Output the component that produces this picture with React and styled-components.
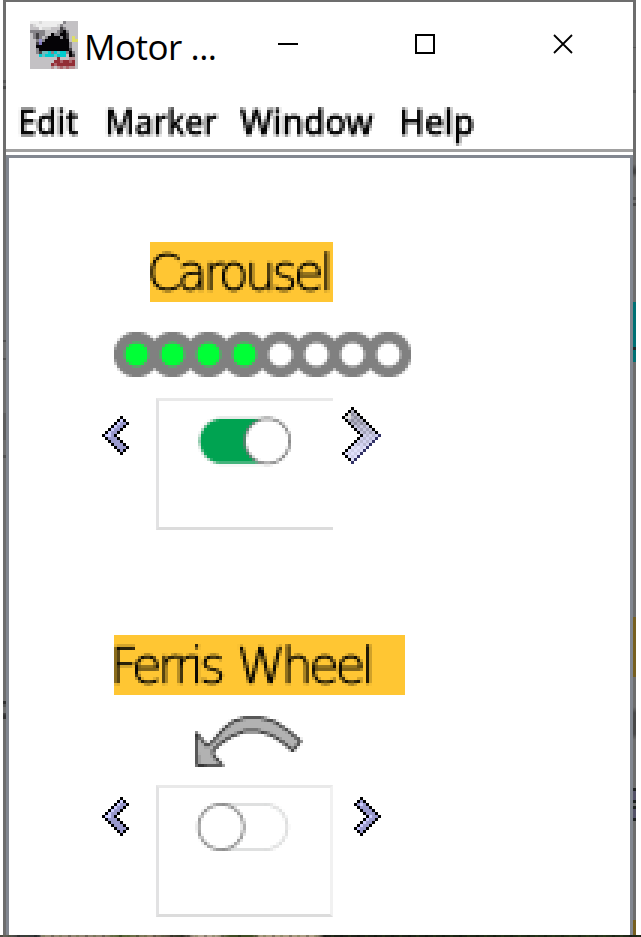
import React from "react";
import styled, { createGlobalStyle } from "styled-components";

const GlobalStyle = createGlobalStyle`
  html, body { margin: 0; background: #fff; overflow: hidden; }
  * { box-sizing: border-box; }
`;

const Screen = styled.main`
  width: 641px;
  height: 937px;
  display: grid;
  grid-template-columns: 3px 3px 627px 3px 5px;
  grid-template-rows: 935px 2px;
  background: #fff;
`;

const FilterDefs = styled.svg`
  position: absolute;
  width: 0;
  height: 0;
`;

const LeftEdge = styled.div`
  grid-column: 2;
  background: linear-gradient(
    #6d6d6d 80px, #555 80px, #555 83px, #6d6d6d 83px, #6d6d6d 86px, #484848 86px, #484848 89px,
    #6d6d6d 89px, #6d6d6d 340px, #505050 340px, #505050 342px, #6d6d6d 342px, #6d6d6d 358px,
    #505050 358px, #505050 360px, #6d6d6d 360px, #6d6d6d 413px, #5d5d5d 413px, #5d5d5d 440px,
    #6d6d6d 440px, #6d6d6d 455px, #515151 455px, #515151 458px, #6d6d6d 458px, #6d6d6d 701px,
    #303030 701px, #303030 704px, #555 704px, #555 707px, #6d6d6d 707px, #6d6d6d 713px,
    #484848 713px, #303030 716px, #303030 719px, #6d6d6d 719px);
`;

const RightEdge = styled.div`
  background: linear-gradient(
    #6d6d6d 47px, #555 47px, #555 48px, #6d6d6d 48px, #6d6d6d 90px, #555 90px, #555 93px,
    #6d6d6d 93px, #6d6d6d 164px, #555 167px, #424242 170px, #424242 173px, #5a5a5a 175px,
    #6d6d6d 178px, #6d6d6d 197px, #505050 197px, #505050 200px, #6d6d6d 200px, #6d6d6d 203px,
    #484848 203px, #484848 206px, #6d6d6d 206px, #6d6d6d 302px, #007074 302px, #007074 347px,
    #202828 347px, #202828 350px, #007074 350px, #007074 362px, #6d6d6d 362px, #6d6d6d 617px,
    #765f20 617px, #765f20 677px, #6d6d6d 677px, #6d6d6d 707px, #484848 713px, #484848 734px,
    #6d6d6d 740px, #6d6d6d 788px, #1c1f1f 788px, #1c1f1f 791px, #545268 791px, #545268 800px,
    #1c1f1f 800px, #1c1f1f 803px, #6d6d6d 803px, #6d6d6d 806px, #1c1f1f 806px, #1c1f1f 809px,
    #545268 809px, #545268 818px, #1c1f1f 818px, #1c1f1f 821px, #6d6d6d 821px, #6d6d6d 920px,
    #765f20 920px);
`;

const GroundStrip = styled.div`
  grid-column: 1 / -1;
  background:
    repeating-linear-gradient(90deg, rgba(0,0,0,.25) 0 3px, transparent 3px 8px, rgba(60,80,30,.25) 8px 11px, transparent 11px 17px),
    linear-gradient(90deg, #6d6a5d 0, #3a3c3c 20px, #343838 39px, #958b78 42px, #8a806c 105px,
      #50602f 120px, #8e8068 150px, #29291f 182px, #b1a491 196px, #b1a491 215px, #3e4a23 230px,
      #3e4a23 252px, #a79b80 260px, #a99c83 315px, #1d2018 325px, #1b2415 460px, #25331b 600px, #1b2016 641px);
`;

const Window = styled.section`
  height: 935px;
  border-top: 2px solid #6d6d6d;
  display: flex;
  flex-direction: column;
  background: #fff;
`;

const TitleBar = styled.header`
  height: 93px;
  padding: 19px 0 0 24px;
  display: flex;
  align-items: flex-start;
`;

const Title = styled.h1`
  margin: 0 0 0 6px;
  width: 191px;
  height: 48px;
  font: 400 35px/51px "Open Sans", sans-serif;
  letter-spacing: -0.5px;
  color: #000;
  white-space: pre;
`;

const Controls = styled.div`
  display: flex;
  gap: 117px;
  padding: 13px 0 0 3px;
`;

const MenuBar = styled.nav`
  height: 60px;
  border-bottom: 3px solid #fff;
  box-shadow: inset 0 -3px #a0a0a0;
  display: grid;
  grid-template-columns: 87px 135px 159px 1fr;
  padding-left: 12px;
  filter: url(#coarse);
`;

const MenuItem = styled.span`
  height: 57px;
  font: 500 37px/51px "Noto Sans", sans-serif;
  -webkit-text-stroke: 0.6px #000;
  color: #000;
  white-space: pre;
  transform: scaleX(${(p) => p.$stretch});
  transform-origin: 0 0;
`;

const Client = styled.div`
  flex: 1;
  border: 3px solid #828790;
  border-bottom: 0;
  display: flex;
  flex-direction: column;
  align-items: flex-start;
`;

const Panel = styled.section`
  margin-top: ${(p) => p.$top}px;
  display: flex;
  flex-direction: column;
  align-items: flex-start;
`;

const Caption = styled.h2`
  margin: 0 0 0 ${(p) => p.$indent}px;
  width: ${(p) => p.$width}px;
  height: 60px;
  background: #ffc633;
`;

const CaptionText = styled.span`
  display: block;
  width: 100%;
  height: 60px;
  font: 200 49.5px/62px "DejaVu Sans Light", "DejaVu Sans", sans-serif;
  -webkit-text-stroke: 0.9px #000;
  letter-spacing: ${(p) => p.$spacing}px;
  word-spacing: 4px;
  text-indent: ${(p) => p.$shift}px;
  color: #000;
  white-space: pre;
  filter: url(#coarse);
`;

const Indicator = styled.div`
  margin: ${(p) => p.$top}px 0 0 ${(p) => p.$indent}px;
  display: flex;
`;

const Stepper = styled.div`
  margin-top: ${(p) => p.$top}px;
  padding-left: 93px;
  display: flex;
  align-items: flex-start;
`;

const StepButton = styled.button`
  border: 0;
  padding: 0;
  background: none;
  display: flex;
  margin-top: ${(p) => p.$drop}px;
`;

const Slot = styled.div`
  width: 177px;
  height: ${(p) => p.$height}px;
  margin: 0 ${(p) => p.$after}px 0 27px;
  padding: ${(p) => p.$padTop}px 0 0 ${(p) => p.$padLeft}px;
  border: 3px solid #e2e2e3;
  border-top-color: #e9e9e9;
  border-bottom-color: #dcdcdc;
  border-right: ${(p) => (p.$open ? "0" : "3px solid #f1f1f1")};
`;

const Art = styled.svg`
  display: block;
  flex: none;
  shape-rendering: crispEdges;
`;

const CELL = 3;

/* Draws a grid of 3px cells, each coloured by paint(column, row). */
function Pixels({ cols, rows, paint }) {
  const cells = [];
  for (let y = 0; y < rows; y++) {
    for (let x = 0; x < cols; x++) {
      const fill = paint(x, y);
      if (fill) cells.push(<rect key={`${x}-${y}`} x={x} y={y} width="1" height="1" fill={fill} />);
    }
  }
  return (
    <Art width={cols * CELL} height={rows * CELL} viewBox={`0 0 ${cols} ${rows}`}>
      {cells}
    </Art>
  );
}

/* Averages a point colour function over one cell. */
const smooth = (colourAt) => (x, y) => {
  const sum = [0, 0, 0];
  const n = 6;
  for (let i = 0; i < n; i++)
    for (let j = 0; j < n; j++) {
      const c = colourAt(x + (i + 0.5) / n, y + (j + 0.5) / n);
      for (let k = 0; k < 3; k++) sum[k] += c[k];
    }
  const mean = sum.map((v) => Math.round(v / (n * n)));
  return mean.every((v) => v > 252) ? null : `rgb(${mean.join(",")})`;
};

const WHITE = [255, 255, 255];

const dotsPaint = smooth((x, y) => {
  let colour = WHITE;
  for (let i = 0; i < 8; i++) {
    const d = Math.hypot(x - (7.5 + 12 * i), y - 7.5);
    if (d < 3.9) return i < 4 ? [0, 255, 54] : WHITE;
    if (d < 7.6) colour = [128, 128, 128];
  }
  return colour;
});

const pillDistance = (x, y, x1, x2, cy) => Math.hypot(x - Math.min(Math.max(x, x1), x2), y - cy);

const onPaint = smooth((x, y) => {
  const d = Math.hypot(x - 23.1, y - 8.35);
  if (d < 7.1) return WHITE;
  if (d < 7.85) return [118, 118, 118];
  const p = pillDistance(x, y, 8.1, 23, 8.35);
  if (p < 7.4) return [0, 163, 81];
  if (p < 7.9) return [205, 215, 209];
  return WHITE;
});

const offPaint = smooth((x, y) => {
  const d = Math.hypot(x - 8.7, y - 8);
  if (d < 7.1) return WHITE;
  if (d < 7.95) return [135, 135, 135];
  const p = pillDistance(x, y, 9, 23.2, 8);
  if (p > 7.1 && p < 7.95) return [217, 218, 218];
  return WHITE;
});

const ARROW = [
  [1.5, 5.7], [5, 9.9], [7.2, 8.2], [10.4, 4.4], [13.8, 1.8], [17.6, 0.6], [23, 0.6], [27.6, 1.9],
  [32.5, 5.2], [36.2, 8.4], [33.6, 11.6], [30.3, 8.8], [26.5, 6.4], [22, 5], [17.7, 5], [13.2, 6.8],
  [9.4, 9.2], [7, 11.6], [7.2, 13.2], [10.2, 16.4], [1.7, 16.5],
];

const arrowPaint = smooth((x, y) => {
  let inside = false;
  let near = 99;
  ARROW.forEach(([ax, ay], i) => {
    const [bx, by] = ARROW[(i + 1) % ARROW.length];
    if (ay > y !== by > y && x < ((bx - ax) * (y - ay)) / (by - ay) + ax) inside = !inside;
    const t = Math.max(0, Math.min(1, ((x - ax) * (bx - ax) + (y - ay) * (by - ay)) / ((bx - ax) ** 2 + (by - ay) ** 2)));
    near = Math.min(near, Math.hypot(x - ax - t * (bx - ax), y - ay - t * (by - ay)));
  });
  if (near < 0.45) return [55, 55, 55];
  return inside ? [178, 178, 178] : WHITE;
});

/* Small chevron: black outline, lavender inside, lit on its upper edge. */
const smallShape = (x, y) => {
  const v = Math.abs(y - 6);
  const outer = 8 - v;
  const inner = v > 4 ? v - 4 : 4 - v;
  if (x < inner || x > outer) return null;
  if (x === inner || x === outer) return "#000";
  return "#9999cc";
};
const smallNext = (x, y) => {
  const fill = smallShape(x, y);
  return fill === "#9999cc" && ((y <= 2 && x === y) || (y > 6 && x === 11 - y) || (y === 6 && x === 5)) ? "#ccccff" : fill;
};
const smallPrevious = (x, y) => {
  const fill = smallShape(8 - x, y);
  return fill === "#9999cc" && (x === 7 - y || (y === 6 && x < 3)) ? "#ccccff" : fill;
};

/* Large chevron: highlighted state with a dithered face and navy lower edge. */
const largeNext = (x, y) => {
  const v = Math.abs(y - 9);
  const outer = 12 - v;
  const inner = v > 6 ? v - 6 : 6 - v;
  if (x < inner || x > outer) return null;
  if (x === inner) return y === 18 ? "#333366" : "#000";
  if (x === outer) return y >= 9 ? "#333366" : "#000";
  if (x < 3 && y < 4) return "#dcdcdc";
  const odd = (x + y) % 2;
  if (y < 6) return odd ? "#8e8ea0" : "#b0b0c2";
  if (y < 9) return odd ? "#a3a3b8" : "#c6c6de";
  if (y < 13) return odd ? "#b9b9d2" : "#d2d2f0";
  return odd ? "#cfcfe8" : "#e0e0fb";
};

const ENGINE = [
  "wwwvwwwwwwwg....",
  ".vwwwwwwwvg.....",
  "...wvvv...dg....",
  "ggggg....gdkg...",
  ".gdgg..kggkkd...",
  ".gdg.gkkkkgkd.y.",
  "..gbgkkkkkkkk.yy",
  "..dpkkkkkkkkkg..",
  "..kkkkkkkkkkkg..",
  "..gkkkkkkkkkkd..",
  "..gdaacgcaccgkg.",
  "...cacccaccc.kd.",
  ".........r...nn.",
  "........rrmrrmr.",
  ".......rmrrrrrr.",
  ".......n.nmnmnn.",
];
const ENGINE_COLOURS = {
  ".": "#c3c1c4", w: "#ededed", v: "#d9d9d9", g: "#858388", d: "#424043", k: "#050306",
  b: "#9a94ce", p: "#8279bd", y: "#dedd67", c: "#00cdd0", a: "#6fbcc0", r: "#932d35", m: "#ad646b", n: "#b99194",
};

export default function App() {
  return (
    <>
      <GlobalStyle />
      <FilterDefs aria-hidden="true">
        {/* Averages 3x3 blocks so lettering sits on the same 3px cells as the drawings. */}
        <filter id="coarse" x="0" y="0" width="1" height="1" colorInterpolationFilters="sRGB">
          <feConvolveMatrix in="SourceGraphic" order="3" kernelMatrix="1 1 1 1 1 1 1 1 1" preserveAlpha="false" result="soft" />
          <feFlood x="1" y="1" width="1" height="1" floodColor="#000" result="dot" />
          <feOffset in="dot" dx="0" dy="0" x="0" y="0" width="3" height="3" result="cell" />
          <feTile in="cell" result="mask" />
          <feComposite in="soft" in2="mask" operator="in" />
          <feMorphology operator="dilate" radius="1" />
        </filter>
      </FilterDefs>
      <Screen>
        <LeftEdge />
        <Window>
          <TitleBar>
            <Pixels cols={16} rows={16} paint={(x, y) => ENGINE_COLOURS[ENGINE[y][x]]} />
            <Title>Motor ...</Title>
            <Controls>
              <Art width="20" height="20"><path d="M0 10H20" stroke="#000" strokeWidth="2" /></Art>
              <Art width="20" height="20"><rect x="1" y="1" width="18" height="18" fill="none" stroke="#000" strokeWidth="2" /></Art>
              <svg width="22" height="20"><path d="M2 1L20 19M20 1L2 19" stroke="#000" strokeWidth="1.8" /></svg>
            </Controls>
          </TitleBar>
          <MenuBar>
            <MenuItem $stretch={0.89}>Edit</MenuItem>
            <MenuItem $stretch={0.875}>Marker</MenuItem>
            <MenuItem $stretch={0.935}>Window</MenuItem>
            <MenuItem $stretch={0.92}>Help</MenuItem>
          </MenuBar>
          <Client>
            <Panel $top={84}>
              <Caption $indent={141} $width={183}>
                <CaptionText $shift={-3} $spacing={-4.2}>Carousel</CaptionText>
              </Caption>
              <Indicator $top={30} $indent={105}><Pixels cols={99} rows={15} paint={dotsPaint} /></Indicator>
              <Stepper $top={21}>
                <StepButton $drop={18} aria-label="Previous"><Pixels cols={9} rows={13} paint={smallPrevious} /></StepButton>
                <Slot $height={132} $after={9} $padTop={15} $padLeft={39} $open>
                  <Pixels cols={31} rows={17} paint={onPaint} />
                </Slot>
                <StepButton $drop={9} aria-label="Next"><Pixels cols={13} rows={19} paint={largeNext} /></StepButton>
              </Stepper>
            </Panel>
            <Panel $top={105}>
              <Caption $indent={105} $width={291}>
                <CaptionText $shift={-4} $spacing={-4.2}>Ferris Wheel</CaptionText>
              </Caption>
              <Indicator $top={21} $indent={183}><Pixels cols={37} rows={17} paint={arrowPaint} /></Indicator>
              <Stepper $top={18}>
                <StepButton $drop={12} aria-label="Previous"><Pixels cols={9} rows={13} paint={smallPrevious} /></StepButton>
                <Slot $height={132} $after={21} $padTop={15} $padLeft={36}>
                  <Pixels cols={32} rows={17} paint={offPaint} />
                </Slot>
                <StepButton $drop={12} aria-label="Next"><Pixels cols={9} rows={13} paint={smallNext} /></StepButton>
              </Stepper>
            </Panel>
          </Client>
        </Window>
        <RightEdge />
        <GroundStrip />
      </Screen>
    </>
  );
}
